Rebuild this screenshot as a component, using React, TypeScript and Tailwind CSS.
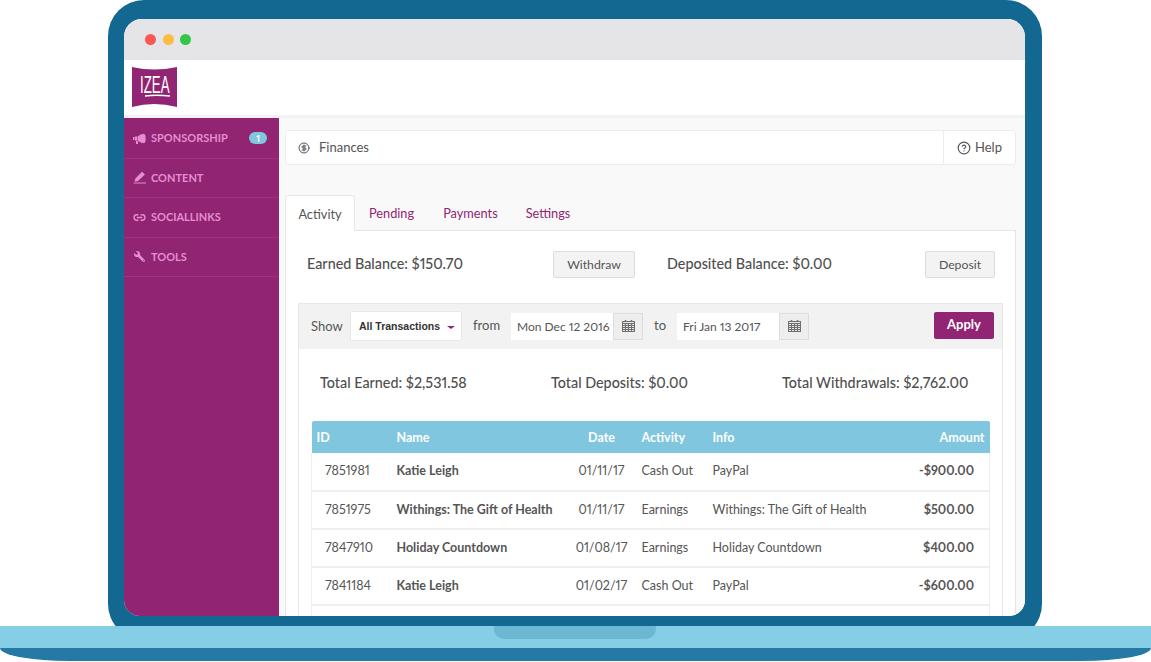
import { CircleDollarSign, CircleHelp, Link2 } from 'lucide-react';
import { FaWrench } from 'react-icons/fa';

const PencilIcon = () => (
  <svg width="13" height="13" viewBox="0 0 13 13" fill="currentColor">
    <path d="M9 0.8 L12 3.6 L5 10 L1.5 11 L2.4 7.4 Z" />
    <path d="M5.5 11.6 H13 V12.6 H0.5 V11.8 Z" />
  </svg>
);

const MegaphoneIcon = () => (
  <svg width="13" height="11" viewBox="0 0 13 11" fill="currentColor">
    <rect x="0" y="4" width="1.5" height="3" />
    <rect x="2" y="3.5" width="2" height="4" />
    <path d="M4.5 3.5 L9 0.8 V10.2 L4.5 7.5 Z" />
    <rect x="3" y="8" width="2" height="3" />
    <ellipse cx="10.5" cy="5.5" rx="2.2" ry="4.7" />
  </svg>
);

const navItems = [
  { label: 'SPONSORSHIP', icon: <MegaphoneIcon />, badge: '1' },
  { label: 'CONTENT', icon: <PencilIcon /> },
  { label: 'SOCIALLINKS', icon: <Link2 size={13} strokeWidth={2.5} /> },
  { label: 'TOOLS', icon: <FaWrench className="w-[13px] -scale-x-100 text-[11px]" /> },
];

const rows = [
  { id: '7851981', name: 'Katie Leigh', date: '01/11/17', activity: 'Cash Out', info: 'PayPal', amount: '-$900.00' },
  { id: '7851975', name: 'Withings: The Gift of Health', date: '01/11/17', activity: 'Earnings', info: 'Withings: The Gift of Health', amount: '$500.00' },
  { id: '7847910', name: 'Holiday Countdown', date: '01/08/17', activity: 'Earnings', info: 'Holiday Countdown', amount: '$400.00' },
  { id: '7841184', name: 'Katie Leigh', date: '01/02/17', activity: 'Cash Out', info: 'PayPal', amount: '-$600.00' },
];

const Logo = () => (
  <svg width="45" height="40" viewBox="0 0 45 40">
    <path d="M0 0 Q22 5 45 0 V40 Q22 34 0 40 Z" fill="#912473" />
    <text transform="translate(8 26) scale(0.95 1.7)" fill="#fff" fontSize="14" fontFamily="Liberation Sans">IZEA</text>
    <path d="M13 29 Q24 27.5 38 29" stroke="#fff" strokeWidth="1.5" fill="none" />
  </svg>
);

const CalendarIcon = () => (
  <svg width="13" height="12" viewBox="0 0 13 12" fill="none" stroke="#6f6f6f" strokeWidth="1">
    <rect x="0.5" y="1.5" width="12" height="10" fill="#e8e8e8" />
    <path d="M0.5 3.5H12.5M0.5 5.5H12.5M0.5 7.5H12.5M0.5 9.5H12.5M3.5 3.5V11.5M6.5 3.5V11.5M9.5 3.5V11.5" />
    <path d="M3.5 0V2M9.5 0V2" strokeWidth="1.5" />
  </svg>
);

const DateField = ({ value }: { value: string }) => (
  <div className="flex h-[27px]">
    <div className="flex w-[102px] items-center whitespace-nowrap bg-white pt-[1px] pl-[6px] text-[12px] text-[#555]">{value}</div>
    <div className="flex w-[30px] items-center justify-center border border-[#ddd] bg-[#eee]">
      <CalendarIcon />
    </div>
  </div>
);

const App = () => {
  return (
    <div className="h-[662px] w-[1151px] overflow-hidden bg-white font-[Lato,sans-serif] text-[#555] proportional-nums">
      <div className="ml-[108px] h-[626px] w-[934px] overflow-hidden">
        <div className="h-[640px] rounded-[36px] bg-[#126890] px-[16px] pt-[19px]">
          <div className="flex h-[597px] w-[901px] flex-col overflow-hidden rounded-t-[18px] rounded-b-[16px] bg-white">
            <div className="flex h-[41px] shrink-0 items-center gap-[6.5px] bg-[#e5e5e8] pl-[21px]">
              <span className="h-[11px] w-[11px] rounded-full bg-[#fc5753]" />
              <span className="h-[11px] w-[11px] rounded-full bg-[#fdbc40]" />
              <span className="h-[11px] w-[11px] rounded-full bg-[#33c748]" />
            </div>
            <div className="flex h-[58px] shrink-0 border-b-[3px] border-[#f2f2f2] pt-[7px] pl-[8px]">
              <Logo />
            </div>
            <div className="flex min-h-0 flex-1">
              <aside className="w-[155px] shrink-0 bg-[#912473] pt-[1px]">
                {navItems.map(({ label, icon, badge }) => (
                  <div key={label} className="flex h-[39.5px] items-center border-b border-[#9c3580] pl-[9px] text-[#e58dd0]">
                    {icon}
                    <span className="ml-[5px] text-[11px] font-bold">{label}</span>
                    {badge && (
                      <span className="mr-[12px] ml-auto flex h-[12px] w-[18px] items-center justify-center rounded-full bg-[#7fc6de] text-[9px] font-bold text-white">
                        {badge}
                      </span>
                    )}
                  </div>
                ))}
              </aside>
              <main className="min-w-0 flex-1 bg-[#f9f9f9] pt-[12px] pr-[9px] pl-[6px]">
                <div className="flex h-[35px] items-center rounded-[3px] border border-[#ececec] bg-white text-[13px]">
                  <CircleDollarSign size={12} className="ml-[12px] text-[#555]" />
                  <span className="ml-[9px] flex-1">Finances</span>
                  <div className="flex h-full w-[72px] items-center justify-center gap-[4px] border-l border-[#ececec]">
                    <CircleHelp size={14} />
                    <span>Help</span>
                  </div>
                </div>

                <div className="mt-[30px] flex h-[35px] text-[12.75px] text-[#912473]">
                  <div className="z-10 -mb-px flex w-[70px] items-center justify-center rounded-t-[3px] border border-b-0 border-[#e6e6e6] bg-white pt-[2px] text-[#555]">Activity</div>
                  <div className="ml-[14px] flex items-center pt-[2px]">Pending</div>
                  <div className="ml-[29px] flex items-center pt-[2px]">Payments</div>
                  <div className="ml-[28px] flex items-center pt-[2px]">Settings</div>
                </div>

                <div className="h-[500px] border border-[#e6e6e6] bg-white px-[12px] pt-[20px]">
                  <div className="flex h-[27px] items-center text-[14.35px] font-medium text-[#4f4f4f]">
                    <span className="w-[255px] pb-[1px] pl-[9px]">Earned Balance: $150.70</span>
                    <button className="flex h-[27px] w-[82px] items-center justify-center rounded-[2px] border border-[#ddd] bg-[#f3f3f3] pt-[1px] text-[12.25px] font-normal text-[#555]">Withdraw</button>
                    <span className="ml-[32px] flex-1 pb-[1px]">Deposited Balance: $0.00</span>
                    <button className="mr-[8px] flex h-[27px] w-[70px] items-center justify-center rounded-[2px] border border-[#ddd] bg-[#f3f3f3] pt-[1px] text-[12.25px] font-normal text-[#555]">Deposit</button>
                  </div>

                  <div className="mt-[25px] border border-[#e8e8e8]">
                    <div className="flex h-[45px] items-center bg-[#f2f2f2] pb-[1px] pl-[12px] text-[13px]">
                      <span className="w-[39px] pt-[1px]">Show</span>
                      <div className="flex h-[30px] w-[112px] items-center rounded-[2px] border border-[#e8e8e8] bg-white pt-[1px] pl-[8px] font-['Liberation_Sans',sans-serif] text-[10.5px] font-bold text-[#333]">
                        All Transactions
                        <span className="mt-[2px] ml-[7px] border-x-[4px] border-t-[3px] border-x-transparent border-t-[#912473]" />
                      </div>
                      <span className="ml-[11px] w-[38px]">from</span>
                      <DateField value="Mon Dec 12 2016" />
                      <span className="ml-[11px] w-[23px]">to</span>
                      <DateField value="Fri Jan 13 2017" />
                      <button className="mr-[8px] mb-[2px] ml-auto h-[27px] w-[60px] rounded-[2px] bg-[#912473] text-[13px] font-bold text-white">Apply</button>
                    </div>

                    <div className="flex h-[72px] pt-[24px] pl-[21px] text-[14.35px] font-medium leading-[20px] text-[#4f4f4f]">
                      <span className="w-[231px]">Total Earned: $2,531.58</span>
                      <span className="w-[231px]">Total Deposits: $0.00</span>
                      <span>Total Withdrawals: $2,762.00</span>
                    </div>

                    <table className="ml-[12px] w-[678px] table-fixed border-collapse text-[12.5px]">
                      <colgroup>
                        <col className="w-[85px]" />
                        <col className="w-[165px]" />
                        <col className="w-[80px]" />
                        <col className="w-[71px]" />
                        <col className="w-[170px]" />
                        <col className="w-[107px]" />
                      </colgroup>
                      <thead>
                        <tr className="h-[32px] bg-[#7fc6de] text-left font-bold text-white [&>th]:pt-[2px]">
                          <th className="rounded-tl-[2px] pl-[5px]">ID</th>
                          <th>Name</th>
                          <th className="text-center">Date</th>
                          <th>Activity</th>
                          <th>Info</th>
                          <th className="rounded-tr-[2px] pr-[5px] text-right">Amount</th>
                        </tr>
                      </thead>
                      <tbody>
                        {rows.map((row) => (
                          <tr key={row.id} className="h-[38px] border-x border-b-2 border-[#efefef]">
                            <td className="pl-[13px]">{row.id}</td>
                            <td className="font-bold">{row.name}</td>
                            <td className="text-center">{row.date}</td>
                            <td>{row.activity}</td>
                            <td>{row.info}</td>
                            <td className="pr-[15px] text-right font-bold">{row.amount}</td>
                          </tr>
                        ))}
                        <tr className="h-[38px] border-x border-[#efefef]">
                          <td colSpan={6} />
                        </tr>
                      </tbody>
                    </table>
                  </div>
                </div>
              </main>
            </div>
          </div>
        </div>
      </div>
      <div className="h-[22px] w-[1151px] bg-[#85cee5]">
        <div className="ml-[494px] h-[13px] w-[162px] rounded-b-[10px] bg-[#6cb8d3]" />
      </div>
      <div className="h-[13px] w-[1151px] rounded-b-[70px_13px] bg-[#247aa5]" />
    </div>
  );
};

export default App;
